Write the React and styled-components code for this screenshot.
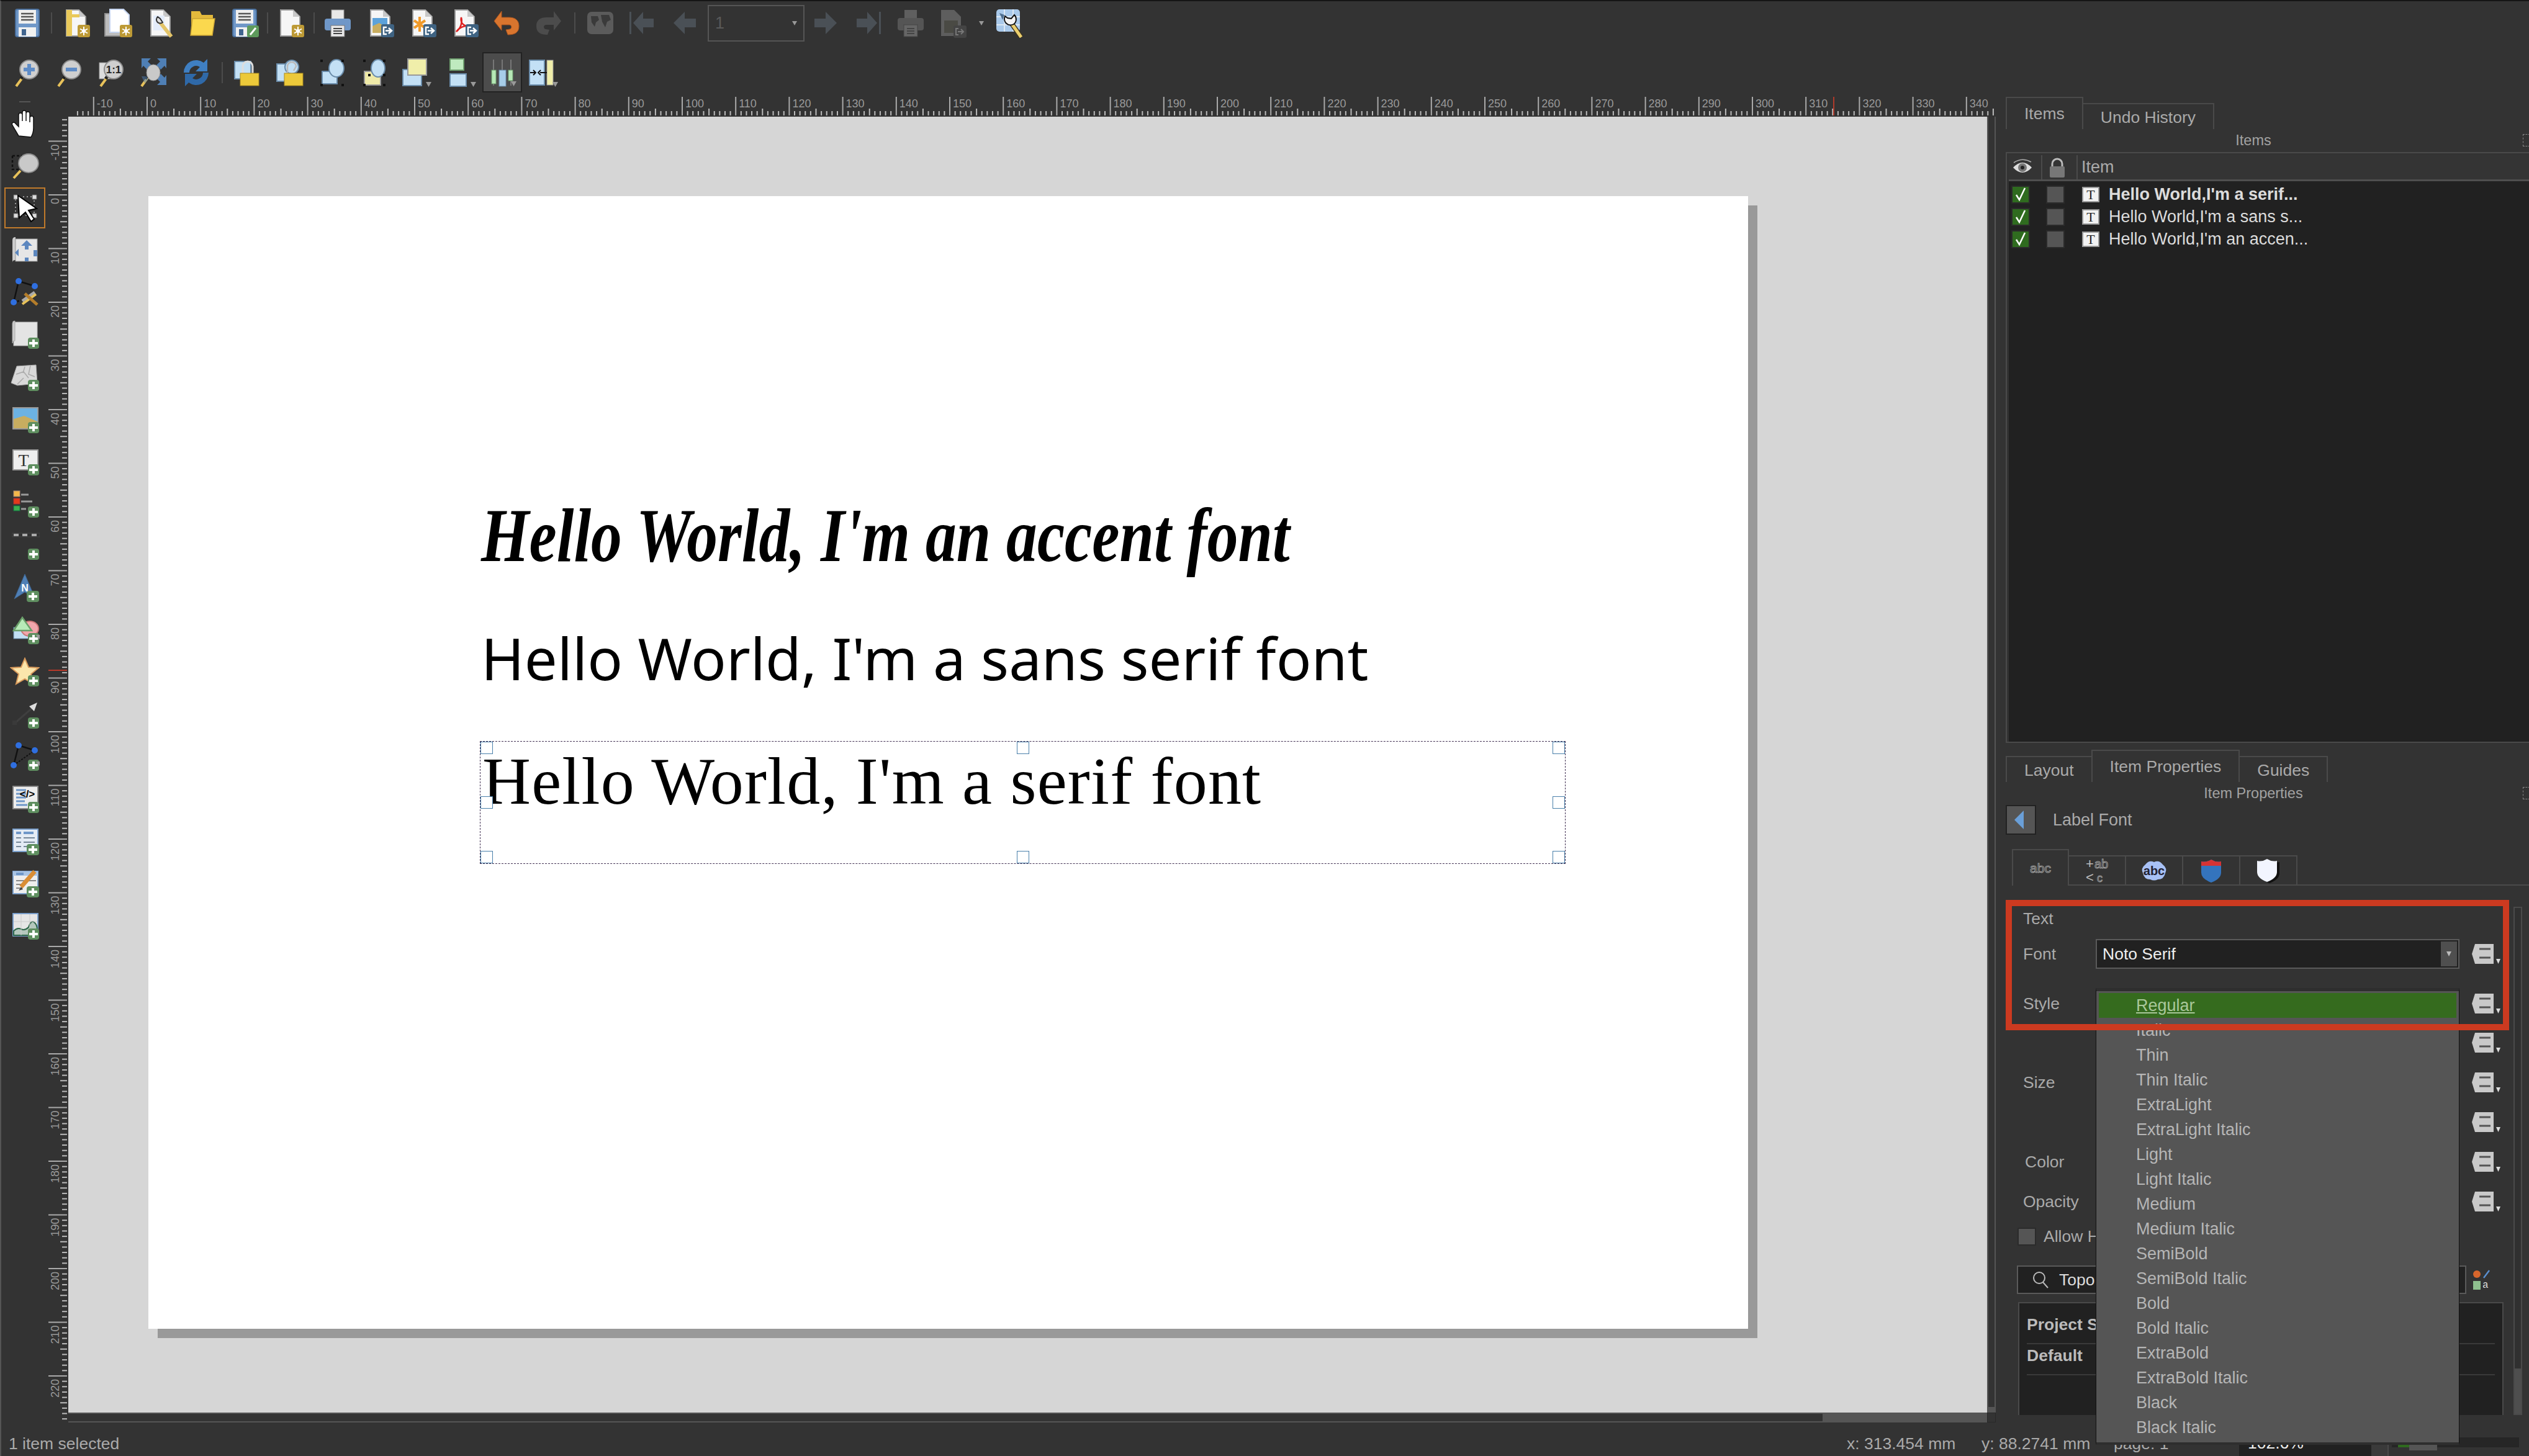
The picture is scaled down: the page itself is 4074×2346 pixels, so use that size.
import styled, { createGlobalStyle } from "styled-components";

const GlobalStyle = createGlobalStyle`
  html, body { margin: 0; padding: 0; background: #333; overflow: hidden; }
  * { box-sizing: border-box; }
`;

const Root = styled.div`
  width: 4074px;
  height: 2346px;
  display: flex;
  flex-direction: column;
  background: #333;
  color: #aaa;
  font-family: "Liberation Sans", Arial, sans-serif;
  font-size: 27px;
  border-left: 2px solid #555;
  border-top: 2px solid #151515;
  margin-left: 0;
`;

/* ---------- small drawing helpers ---------- */
const Icon = ({ children, size = 48 }) => (
  <svg width={size} height={size} viewBox="0 0 48 48" fontFamily="Liberation Sans, sans-serif">
    {children}
  </svg>
);
const Doc = () => (
  <>
    <path d="M9 3h20l11 11v31H9z" fill="#f6f6f6" stroke="#9a9a9a" strokeWidth="2" />
    <path d="M29 3v11h11z" fill="#c8c8c8" />
  </>
);
const Gear = () => (
  <g>
    <rect x="27" y="27" width="20" height="20" rx="3" fill="#bd9a36" />
    <path d="M37 30v14M31 33.5l12 7M43 33.5l-12 7" stroke="#fff" strokeWidth="2" />
    <circle cx="37" cy="37" r="3" fill="#fff" />
  </g>
);
const Out = () => (
  <g>
    <rect x="26" y="26" width="21" height="21" rx="3" fill="#3f6382" />
    <path d="M35 31h-5v11h5" fill="none" stroke="#fff" strokeWidth="2.5" />
    <path d="M33 36.500h8M38 32l5 4.500-5 4.500" fill="none" stroke="#fff" strokeWidth="2.5" />
  </g>
);
const Plus = ({ x = 29 }) => (
  <g>
    <rect x={x} y="29" width={47 - x} height="18" rx="4" fill="#5f8f60" />
    <path d={`M${(x + 47) / 2} 32v12M${(x + 47) / 2 - 7} 38h14`} stroke="#fff" strokeWidth="4" />
  </g>
);
const Drop = ({ x = 39, y = 39 }) => <path d={`M${x} ${y}h9l-4.500 8z`} fill="#999" />;
const Glass = ({ children }) => (
  <>
    <path d="M6 46l11-15" stroke="#e8c25a" strokeWidth="4" />
    <path d="M14 34l3-4" stroke="#222" strokeWidth="5" />
    <circle cx="27" cy="19" r="15" fill="#cfcfcf" stroke="#8d8d8d" strokeWidth="2" />
    {children}
  </>
);
const Floppy = () => (
  <>
    <rect x="5" y="2" width="38" height="44" rx="3" fill="#6f97c8" stroke="#4a6f9c" strokeWidth="2" />
    <rect x="10" y="3" width="28" height="22" fill="#efefef" />
    <path d="M14 9h20M14 14h20M14 19h20" stroke="#555" strokeWidth="2.500" />
    <rect x="10" y="31" width="28" height="15" fill="#f1f1f1" />
    <rect x="15" y="34" width="7" height="10" fill="#41658f" />
  </>
);
const Square = ({ x, y, w, h, fill = "#c3e0f5", stroke = "#6a8caa" }) => (
  <rect x={x} y={y} width={w} height={h} fill={fill} stroke={stroke} strokeWidth="2" />
);

const icons = {
  save: <Floppy />,
  newLayout: (
    <>
      <Doc />
      <path d="M9 3h9v42H9z" fill="#e9c95a" />
      <path d="M18 10h12v5H18z" fill="#e9c95a" />
      <Gear />
    </>
  ),
  duplicate: (
    <>
      <rect x="3" y="9" width="32" height="36" fill="#bdbdbd" stroke="#8f8f8f" strokeWidth="2" />
      <path d="M11 2h22l9 9v28H11z" fill="#fff" stroke="#c5d4ef" strokeWidth="2" />
      <Gear />
    </>
  ),
  manager: (
    <>
      <Doc />
      <path d="M13 12h18v24H13z" fill="#e4ecfa" />
      <path d="M42 46L23 22" stroke="#e3c468" strokeWidth="6" />
      <path d="M20 14a6 6 0 108 9l-4-6z" fill="#ddd" stroke="#333" strokeWidth="2" />
    </>
  ),
  folder: (
    <>
      <path d="M6 5h14l3 6h18v32H6z" fill="#e3b93c" />
      <path d="M8 17h36l-4 27H5z" fill="#fbd84e" stroke="#c9a234" strokeWidth="1.500" />
    </>
  ),
  saveAs: (
    <>
      <Floppy />
      <rect x="28" y="28" width="19" height="19" rx="3" fill="#5e9a5c" />
      <path d="M33 43l9-11" stroke="#fff" strokeWidth="3" />
    </>
  ),
  newDoc: (
    <>
      <Doc />
      <Gear />
    </>
  ),
  print: (
    <>
      <rect x="14" y="3" width="20" height="18" fill="#e8e8e8" stroke="#999" />
      <rect x="3" y="17" width="42" height="19" rx="4" fill="#6f97c8" />
      <rect x="13" y="28" width="22" height="18" fill="#e8e8e8" stroke="#777" />
      <path d="M17 33h14M17 37h14M17 41h14" stroke="#444" strokeWidth="2" />
    </>
  ),
  image: (
    <>
      <Doc />
      <rect x="12" y="16" width="24" height="24" fill="#5ca2da" />
      <path d="M12 40V29l11-5 13 8v8z" fill="#c8ad60" />
      <Out />
    </>
  ),
  svg: (
    <>
      <Doc />
      <path d="M20 14v24M11 20l18 12M29 20L11 32" stroke="#f09a2a" strokeWidth="4" />
      <Out />
    </>
  ),
  pdf: (
    <>
      <Doc />
      <path d="M11 38c8-6 10-16 8-23-2 9 4 14 12 14-8-1-16 3-20 9z" fill="none" stroke="#d22" strokeWidth="2.500" />
      <Out />
    </>
  ),
  undo: (
    <path
      d="M16 5L4 21l12 15v-9h12c5 0 5 6 1 7l-6 1 3 8c12 0 18-4 18-14S37 15 28 15H16z"
      fill="#d9752e"
      stroke="#a9551f"
    />
  ),
  redo: (
    <path
      d="M32 5l12 16-12 15v-9H20c-5 0-5 6-1 7l6 1-3 8C10 43 4 39 4 29s7-14 16-14h12z"
      fill="#4c4c4c"
    />
  ),
  atlas: (
    <>
      <rect x="3" y="6" width="42" height="36" rx="7" fill="#5b5b5b" />
      <path d="M9 13h11l2 6-5 4-2 7-5-7zM25 11h13l3 8-6 3-3 9-5-9z" fill="#3a3a3a" />
    </>
  ),
  first: <path d="M3 6h3v36H3zM9 24L25 6v11h17v14H25v11z" fill="#4a5056" />,
  prev: <path d="M6 24L24 6v11h18v14H24v11z" fill="#4a5056" />,
  next: <path d="M42 24L24 6v11H6v14h18v11z" fill="#4a5056" />,
  last: <path d="M45 6h-3v36h3zM39 24L23 6v11H6v14h17v11z" fill="#4a5056" />,
  printDim: (
    <>
      <rect x="14" y="3" width="20" height="16" fill="#5f5f5f" />
      <rect x="3" y="16" width="42" height="20" rx="4" fill="#555" />
      <rect x="13" y="27" width="22" height="19" fill="#666" stroke="#444" />
      <path d="M18 33h12M18 37h12M18 41h12" stroke="#444" strokeWidth="2" />
    </>
  ),
  exportDim: (
    <>
      <path d="M5 3h21l11 11v31H5z" fill="#5e5e5e" />
      <rect x="10" y="20" width="22" height="20" fill="#4a4a44" />
      <rect x="25" y="28" width="21" height="20" rx="3" fill="#444" />
      <path d="M33 33h-4v10h4M32 38h9M37 34l4 4-4 4" fill="none" stroke="#777" strokeWidth="2" />
    </>
  ),
  report: (
    <>
      <rect x="3" y="2" width="38" height="36" rx="5" fill="#a9c9ea" />
      <path d="M3 14h38M3 27h38M16 2v36M30 2v36" stroke="#dce8f4" strokeWidth="2" />
      <path d="M8 8l8 3-3 8zM28 16l5 10-8-2z" fill="#4f6f90" />
      <path d="M27 24l16 23" stroke="#3b3320" strokeWidth="8" />
      <path d="M27 24l16 23" stroke="#eccf6d" strokeWidth="5" />
      <path d="M17 13a10 10 0 0014 13 10 10 0 001-15l-5 6-6-1z" fill="#f4f4f4" stroke="#111" strokeWidth="2" />
    </>
  ),
  zoomIn: (
    <Glass>
      <path d="M27 10v18M18 19h18" stroke="#5f8cc6" strokeWidth="6" />
    </Glass>
  ),
  zoomOut: (
    <Glass>
      <path d="M18 19h18" stroke="#5f8cc6" strokeWidth="6" />
    </Glass>
  ),
  zoomFull: (
    <>
      <rect x="4" y="8" width="20" height="26" fill="#ddd" stroke="#999" />
      <Glass>
        <text x="27" y="25" fontSize="17" fontWeight="700" textAnchor="middle" fill="#222">
          1:1
        </text>
      </Glass>
    </>
  ),
  zoomAll: (
    <>
      <path d="M4 1h15l-5 5 6 6-7 7-6-6-3 4zM44 1H29l5 5-6 6 7 7 6-6 3 4zM44 44H29l5-5-6-6 7-7 6 6 3-4z" fill="#4f7fb5" />
      <path d="M4 46l10-14" stroke="#e8c25a" strokeWidth="4" />
      <path d="M10 34l3-4" stroke="#222" strokeWidth="5" />
      <ellipse cx="23" cy="24" rx="11" ry="13" fill="#c9c9c9" stroke="#8d8d8d" />
      <path d="M4 30h8l3 5-6 6z" fill="#4f7fb5" opacity="0.5" />
    </>
  ),
  refresh: (
    <>
      <path d="M4 24A20 20 0 0136 8l6-6v20H23l7-7A11 11 0 0013 24z" fill="#3f7fc2" />
      <path d="M44 24a20 20 0 01-32 16l-6 6V26h19l-7 7a11 11 0 0017-9z" fill="#2f69a8" />
    </>
  ),
  lock: (
    <>
      <Square x={3} y={6} w={26} h={28} />
      <path d="M16 28V14a8 8 0 0116 0v14" fill="none" stroke="#ddd" strokeWidth="3" />
      <rect x="12" y="25" width="30" height="20" fill="#ecc93a" stroke="#a98a20" />
    </>
  ),
  unlock: (
    <>
      <Square x={3} y={10} w={26} h={28} />
      <circle cx="27" cy="15" r="11" fill="#c3e0f5" stroke="#6a8caa" strokeWidth="2" />
      <path d="M20 26V14a7 7 0 0114 0l-4 7" fill="none" stroke="#bbb" strokeWidth="2.500" />
      <rect x="15" y="25" width="30" height="20" fill="#ecc93a" stroke="#a98a20" />
    </>
  ),
  group: (
    <>
      <Square x={8} y={22} w={24} h={20} />
      <ellipse cx="31" cy="17" rx="12" ry="14" fill="#c3e0f5" stroke="#6a8caa" strokeWidth="2" />
      <path d="M5 3h4v4H5zM39 3h4v4h-4zM5 42h4v4H5zM39 42h4v4h-4z" fill="#111" />
    </>
  ),
  ungroup: (
    <>
      <Square x={8} y={22} w={26} h={22} fill="#efeaa8" stroke="#999" />
      <ellipse cx="30" cy="17" rx="11" ry="14" fill="#c3e0f5" stroke="#6a8caa" strokeWidth="2" />
      <path d="M6 3h4v4H6zM38 3h4v4h-4zM6 42h4v4H6zM38 42h4v4h-4zM14 26h4v4h-4zM38 26h4v4h-4z" fill="#111" />
    </>
  ),
  raise: (
    <>
      <Square x={2} y={19} w={30} h={26} />
      <Square x={10} y={2} w={30} h={26} fill="#f0eeaa" stroke="#999" />
      <Drop />
    </>
  ),
  alignStack: (
    <>
      <Square x={6} y={2} w={22} h={18} fill="#bfeabf" stroke="#6f9f6f" />
      <Square x={6} y={26} w={26} h={20} />
      <Drop />
    </>
  ),
  distribute: (
    <>
      <path d="M10 3v42M24 3v42M38 3v42" stroke="#777" strokeWidth="2" />
      <rect x="7" y="20" width="7" height="22" fill="#b6e8b6" stroke="#6f9f6f" />
      <rect x="19" y="20" width="11" height="26" fill="#a7cde8" stroke="#6a8caa" />
      <rect x="34" y="20" width="7" height="17" fill="#b6e8b6" stroke="#6f9f6f" />
      <Drop x={38} y={38} />
    </>
  ),
  resize: (
    <>
      <Square x={2} y={4} w={24} h={40} />
      <rect x="30" y="4" width="10" height="40" fill="#f0eeaa" stroke="#999" />
      <path d="M3 24h8M19 24h8M30 24h-4" stroke="#111" strokeWidth="2" />
      <path d="M8 20l4 4-4 4M20 20l-4 4 4 4" fill="none" stroke="#111" strokeWidth="2" />
      <Drop x={39} y={39} />
    </>
  ),
  hand: (
    <path
      d="M14 44L4 27q-2-4 2-5q2 0 4 3l4 4V10q0-3 3-3q3 0 3 3v10V6q0-3 3-3q3 0 3 3v14V8q0-3 3-3q3 0 3 3v14v-7q0-3 3-3q3 0 3 3v16q0 8-4 15z"
      fill="#fff"
      stroke="#111"
      strokeWidth="1.500"
    />
  ),
  marquee: (
    <>
      <path d="M4 8h16M4 8v22h10" fill="none" stroke="#111" strokeWidth="2.500" strokeDasharray="4 3" />
      <path d="M6 44l11-12" stroke="#e8c25a" strokeWidth="4" />
      <ellipse cx="30" cy="20" rx="16" ry="15" fill="#c9c9c9" stroke="#8d8d8d" strokeWidth="2" />
    </>
  ),
  select: (
    <>
      <rect x="9" y="6" width="30" height="30" fill="none" stroke="#999" strokeWidth="2" strokeDasharray="2 4" />
      <path d="M6 3h7v7H6zM36 3h7v7h-7zM6 33h7v7H6zM36 33h7v7h-7z" fill="#ddd" stroke="#666" />
      <path d="M13 4l30 21-13 3 9 14-5 4-9-15-10 9z" fill="#fff" stroke="#000" strokeWidth="2" />
    </>
  ),
  moveContent: (
    <>
      <path d="M4 8q0-5 5-5v37q-5 0-5 4z" fill="#ccc" />
      <rect x="9" y="6" width="35" height="36" fill="#e6e6e6" stroke="#999" />
      <path d="M27 8l9 9h-6v6h-6v-6h-6zM14 22v12l-6-6zM20 26h-6M30 36h-6v6h6zM38 24h6v10h-6z" fill="#5c87bf" />
    </>
  ),
  editNodes: (
    <>
      <path d="M6 40L14 6l26 8" fill="none" stroke="#111" strokeWidth="2.500" />
      <path d="M6 40l12-3" stroke="#111" strokeWidth="2.500" strokeDasharray="3 3" />
      <path d="M20 38l20-14" stroke="#aaa" strokeWidth="5" />
      <path d="M20 43l22-16" stroke="#e8c25a" strokeWidth="4" />
      <path d="M24 26l20 18" stroke="#b47d2a" strokeWidth="5" />
      <circle cx="14" cy="6" r="5" fill="#2f6fe0" />
      <circle cx="40" cy="14" r="5" fill="#2f6fe0" />
      <circle cx="6" cy="40" r="5" fill="#2f6fe0" />
    </>
  ),
  addMap: (
    <>
      <rect x="6" y="4" width="38" height="38" fill="#e4e4e4" stroke="#bbb" />
      <path d="M4 38q0-4 4-4V2Q4 2 4 6z" fill="#ccc" stroke="#aaa" />
      <Plus />
    </>
  ),
  add3d: (
    <>
      <path d="M11 7l31-2 2 30-32 3-10-4z" fill="#d9d9d9" stroke="#aaa" />
      <path d="M10 20l12-4 8 10M24 8l-3 10M33 6l-3 14 10 4M12 36l10-10" fill="none" stroke="#aaa" strokeWidth="1.500" />
      <Plus />
    </>
  ),
  addPicture: (
    <>
      <rect x="5" y="6" width="40" height="34" fill="#6cb2e3" stroke="#999" strokeWidth="2" />
      <path d="M6 39V24l17-5 21 9v11z" fill="#c8ad60" />
      <Plus />
    </>
  ),
  addLabel: (
    <>
      <rect x="5" y="6" width="40" height="32" fill="#eee" stroke="#999" strokeWidth="2" />
      <text x="22" y="32" fontSize="28" fontFamily="Liberation Serif, serif" textAnchor="middle" fill="#333">
        T
      </text>
      <Plus />
    </>
  ),
  addLegend: (
    <>
      <rect x="6" y="4" width="10" height="9" fill="#f4b74a" stroke="#a87" />
      <rect x="6" y="16" width="10" height="9" fill="#e33a1c" stroke="#a33" />
      <rect x="6" y="28" width="10" height="8" fill="#3cad4f" stroke="#174" />
      <path d="M18 10h12M18 21h18M18 33h8" stroke="#999" strokeWidth="3" />
      <Plus />
    </>
  ),
  addScale: (
    <>
      <rect x="4" y="4" width="44" height="6" fill="#333" stroke="#444" />
      <path d="M6 7h8M20 7h8M35 7h8" stroke="#aaa" strokeWidth="4" />
      <Plus />
    </>
  ),
  addNorth: (
    <>
      <path d="M24 2l17 40-17-11L7 42z" fill="#4f7fb5" stroke="#3c628b" />
      <text x="24" y="30" fontSize="16" fontWeight="700" textAnchor="middle" fill="#fff">
        N
      </text>
      <Plus x={27} />
    </>
  ),
  addShape: (
    <>
      <rect x="6" y="20" width="36" height="18" fill="#c3e0f5" stroke="#6a8caa" />
      <ellipse cx="32" cy="22" rx="14" ry="12" fill="#f2a6ac" stroke="#c77" strokeWidth="2" />
      <path d="M20 4l15 21H6z" fill="#b8eab8" stroke="#6a9f6a" strokeWidth="2.500" />
      <Plus />
      <Drop x={42} y={32} />
    </>
  ),
  addMarker: (
    <>
      <path d="M24 2l6 14 16 1-12 10 4 16-14-8-14 8 4-16L2 17l16-1z" fill="#fbe6ac" stroke="#d99b5c" strokeWidth="2" />
      <Plus />
    </>
  ),
  addArrow: (
    <>
      <path d="M8 38l30-26" stroke="#3f3f3f" strokeWidth="3" />
      <rect x="4" y="34" width="7" height="7" fill="#3a3a3a" />
      <path d="M44 5l-5 14-8-8z" fill="#ddd" />
      <Plus />
    </>
  ),
  addNodeItem: (
    <>
      <path d="M6 38L14 6l26 8" fill="none" stroke="#111" strokeWidth="2.500" />
      <path d="M6 38l34-24" stroke="#111" strokeWidth="2" strokeDasharray="3 2" />
      <circle cx="14" cy="6" r="5" fill="#2f6fe0" />
      <circle cx="40" cy="14" r="5" fill="#2f6fe0" />
      <circle cx="6" cy="38" r="5" fill="#2f6fe0" />
      <Plus />
      <Drop x={42} y={32} />
    </>
  ),
  addHtml: (
    <>
      <rect x="5" y="4" width="40" height="36" fill="#eee" stroke="#888" strokeWidth="2" />
      <path d="M10 10h16M10 16h16M10 22h16M10 28h14M10 34h18" stroke="#6f97c8" strokeWidth="3" />
      <text x="28" y="22" fontSize="17" fontWeight="700" textAnchor="middle" fill="#000">
        {"</>"}
      </text>
      <Plus />
    </>
  ),
  addTable: (
    <>
      <rect x="5" y="5" width="40" height="36" fill="#e4ebf4" stroke="#7ba0cc" strokeWidth="2" />
      <path d="M10 11h8M22 11h16" stroke="#6f97c8" strokeWidth="4" />
      <path d="M10 19h8M22 19h18M10 26h8M22 26h18M10 33h8M22 33h10" stroke="#789" strokeWidth="2" />
      <Plus x={27} />
    </>
  ),
  addFixed: (
    <>
      <rect x="5" y="5" width="40" height="36" fill="#eee" stroke="#7ba0cc" strokeWidth="2" />
      <rect x="5" y="5" width="40" height="7" fill="#a9c4e4" />
      <path d="M10 9h12" stroke="#6f97c8" strokeWidth="4" />
      <path d="M10 20h14M10 26h14M10 32h10M28 20h14" stroke="#888" strokeWidth="2" />
      <path d="M40 5L18 30" stroke="#d98d35" strokeWidth="7" />
      <path d="M18 30l-4 6 7-2z" fill="#444" />
      <Plus x={27} />
    </>
  ),
  addChart: (
    <>
      <rect x="5" y="5" width="40" height="36" fill="#e6e6e6" stroke="#7ba0cc" strokeWidth="2" />
      <path d="M6 33q6-6 12-3t12-3q4-12 9-8t5 12v9H6z" fill="#b4c8bd" stroke="#2d6649" strokeWidth="2" />
      <path d="M18 6v34M32 6v34M6 18h38" stroke="#ccc" />
      <Plus />
    </>
  ),
};

/* ---------- top toolbars ---------- */
const TopBar = styled.div`
  height: 148px;
  display: flex;
  flex-direction: column;
`;
const ToolRow = styled.div`
  display: flex;
  align-items: center;
  height: ${(p) => p.$h}px;
  margin-top: ${(p) => p.$mt || 0}px;
  padding-left: 8px;
`;
const ToolBtn = styled.div`
  width: ${(p) => p.$w || 68}px;
  height: ${(p) => (p.$on ? "65px" : "48px")};
  display: flex;
  align-items: center;
  justify-content: center;
  flex: none;
  background: ${(p) => (p.$on ? "#4c4c4c" : "transparent")};
  outline: ${(p) => (p.$on ? "2px solid #222" : "none")};
  outline-offset: -2px;
`;
const Sep = styled.div`
  width: ${(p) => p.$w}px;
  height: 34px;
  flex: none;
  display: flex;
  justify-content: center;
  &::after {
    content: "";
    width: 2px;
    height: 100%;
    background: ${(p) => (p.$line ? "#4c4c4c" : "transparent")};
  }
`;
const MiniDrop = styled.div`
  width: 23px;
  flex: none;
  display: flex;
  justify-content: center;
`;
const PageSpin = styled.div`
  width: 156px;
  height: 59px;
  margin-left: 3px;
  flex: none;
  display: flex;
  align-items: center;
  justify-content: space-between;
  padding: 0 10px;
  background: transparent;
  border: 2px solid #555;
  color: #5a5a5a;
`;
const SpinArrow = styled.span`
  width: 0;
  height: 0;
  border-left: 4px solid transparent;
  border-right: 4px solid transparent;
  border-top: 7px solid #999;
`;

/* ---------- main area ---------- */
const Main = styled.div`
  display: flex;
  height: 2146px;
  flex: none;
`;
const ToolColumn = styled.div`
  width: 76px;
  flex: none;
  display: flex;
  flex-direction: column;
  align-items: center;
  padding-top: 13px;
`;
const ColumnGrip = styled.div`
  width: 18px;
  height: 2px;
  flex: none;
  background: #555;
`;
const ColumnTool = styled.div`
  width: 66px;
  height: ${(p) => (p.$on ? "66px" : "68px")};
  margin: ${(p) => (p.$on ? "1px 0" : "0")};
  flex: none;
  display: flex;
  align-items: center;
  justify-content: center;
  border: ${(p) => (p.$on ? "2px solid #c07a2b" : "none")};
`;
const Workspace = styled.div`
  width: 3153px;
  flex: none;
  display: grid;
  grid-template-columns: 32px 1fr;
  grid-template-rows: 38px 1fr;
`;
const RulerSvg = styled.svg`
  display: block;
  font-family: "Liberation Sans", Arial, sans-serif;
`;
const ViewWrap = styled.div`
  display: flex;
  flex-direction: column;
  padding: 0 16px 4px 0;
  min-height: 0;
`;
const ViewRow = styled.div`
  display: flex;
  flex: 1;
  min-height: 0;
`;
const Canvas = styled.div`
  flex: 1;
  background: #d6d6d6;
  padding: 128px 0 0 129px;
`;
const VScroll = styled.div`
  width: 14px;
  flex: none;
  background: #555;
  padding: 0 2px 9px;
  display: flex;
`;
const VThumb = styled.div`
  flex: 1;
  background: #333;
`;
const ScrollThumb = styled.div`
  width: 100%;
  height: ${(p) => p.$h}px;
  background: #4e4e4e;
`;
const HScroll = styled.div`
  height: 16px;
  flex: none;
  display: flex;
`;
const HTrack = styled.div`
  flex: 1;
  background: #555;
  padding: 2px 265px 2px 0;
  display: flex;
`;
const HThumb = styled.div`
  flex: 1;
  background: #333;
`;
const ScrollCorner = styled.div`
  width: 14px;
  flex: none;
  background: #333;
  border: 1px solid #282828;
`;

/* ---------- layout page ---------- */
const Page = styled.div`
  position: relative;
  width: 2577px;
  height: 1825px;
  background: #fff;
  box-shadow: 15px 15px 0 #999;
`;
const PageLabel = styled.div`
  position: absolute;
  left: ${(p) => p.$x}px;
  top: ${(p) => p.$y}px;
  white-space: nowrap;
  color: #000;
  line-height: 1;
  font-family: ${(p) => p.$font};
  font-size: ${(p) => p.$size}px;
  font-weight: ${(p) => p.$weight || 400};
  font-style: ${(p) => p.$italic || "normal"};
  letter-spacing: ${(p) => p.$track || 0}px;
  transform: scaleX(${(p) => p.$squeeze || 1});
  transform-origin: left center;
`;
const Selection = styled.div`
  position: absolute;
  left: 534px;
  top: 878px;
  width: 1749px;
  height: 198px;
  border: 1px dashed #443355;
  display: grid;
  grid-template-columns: repeat(3, 20px);
  grid-template-rows: repeat(3, 20px);
  justify-content: space-between;
  align-content: space-between;
`;
const Handle = styled.div`
  background: #fff;
  border: 1px solid #4a80aa;
  visibility: ${(p) => (p.$hidden ? "hidden" : "visible")};
`;

/* ---------- dock ---------- */
const Dock = styled.div`
  width: 843px;
  flex: none;
  display: flex;
  flex-direction: column;
  padding-top: 4px;
`;
const TabBar = styled.div`
  display: flex;
  align-items: flex-end;
  height: ${(p) => p.$h}px;
  flex: none;
  margin-top: ${(p) => p.$mt || 0}px;
`;
const Tab = styled.div`
  height: ${(p) => (p.$on ? 52 : 42)}px;
  padding: ${(p) => (p.$on ? "12px" : "8px")} 28px 0;
  margin-right: -2px;
  border: 2px solid #4a4a4a;
  border-bottom: none;
  white-space: nowrap;
  line-height: 1;
  font-size: 26.500px;
  color: #aaa;
`;
const DockTitle = styled.div`
  height: 37px;
  flex: none;
  position: relative;
  display: flex;
  align-items: center;
  justify-content: center;
  padding-right: 45px;
  font-size: 23.500px;
  color: #a2a2a2;
`;
const FloatMark = styled.div`
  position: absolute;
  right: -6px;
  top: 8px;
  width: 16px;
  height: 20px;
  border: 1px dashed #888;
`;
const ItemsPanel = styled.div`
  height: 952px;
  flex: none;
  border: 2px solid #4a4a4a;
  border-right: none;
  padding: 3px 0 0 3px;
  background: #333;
`;
const ItemsInner = styled.div`
  height: 100%;
  background: #212121;
`;
const ItemsHeader = styled.div`
  display: grid;
  grid-template-columns: 54px 57px 1fr;
  height: 42px;
  background: #343434;
  border-bottom: 3px solid #4f4f4f;
`;
const HeaderCell = styled.div`
  display: flex;
  align-items: center;
  padding-left: ${(p) => p.$pl || 0}px;
  border-right: ${(p) => (p.$line ? "2px solid #4a4a4a" : "none")};
  color: #aaa;
`;
const ItemRow = styled.div`
  display: grid;
  grid-template-columns: 54px 57px 50px 1fr;
  align-items: center;
  height: 36px;
  position: relative;
  top: 3px;
`;
const CheckBox = styled.div`
  width: 30px;
  height: 29px;
  margin-left: ${(p) => p.$ml || 0}px;
  display: flex;
  align-items: center;
  justify-content: center;
  background: ${(p) => (p.$on ? "#2f6b1f" : "#555")};
  border: 2px solid #2b2b2b;
`;
const TypeIcon = styled.div`
  width: 28px;
  height: 25px;
  margin-left: 7px;
  background: #f2f2f2;
  border: 2px solid #999;
  color: #222;
  font-family: "Liberation Serif", serif;
  font-size: 22px;
  line-height: 21px;
  text-align: center;
`;
const ItemName = styled.div`
  color: #dcdcdc;
  font-size: 27px;
  font-weight: ${(p) => (p.$bold ? 700 : 400)};
  white-space: nowrap;
`;
const BackRow = styled.div`
  height: 48px;
  flex: none;
  display: flex;
  align-items: center;
  gap: 27px;
`;
const BackBtn = styled.div`
  width: 49px;
  height: 48px;
  background: #555;
  border: 2px solid #222;
  display: flex;
  align-items: center;
  justify-content: center;
  padding-right: 6px;
`;
const SubTabBar = styled.div`
  display: flex;
  align-items: flex-end;
  height: 59px;
  flex: none;
  margin: 23px 0 0 10px;
`;
const SubTab = styled.div`
  width: 92px;
  height: ${(p) => (p.$on ? 59 : 49)}px;
  display: flex;
  align-items: center;
  justify-content: center;
  border: 2px solid #4a4a4a;
  border-left-width: ${(p) => (p.$first ? 2 : 0)}px;
  border-bottom: ${(p) => (p.$on ? "none" : "2px solid #4a4a4a")};
`;
const SubTabFill = styled.div`
  flex: 1;
  border-bottom: 2px solid #4a4a4a;
`;
const Form = styled.div`
  position: relative;
  flex: 1;
  display: flex;
  min-height: 0;
`;
const FormBody = styled.div`
  width: 818px;
  flex: none;
  padding-top: 25px;
`;
const FormRow = styled.div`
  display: flex;
  align-items: center;
  height: ${(p) => p.$h}px;
  margin-top: ${(p) => p.$mt || 0}px;
  padding-left: ${(p) => p.$pl ?? 28}px;
  position: relative;
`;
const FormLabel = styled.div`
  width: ${(p) => p.$w || 117}px;
  flex: none;
  color: #aaa;
  font-size: 26.500px;
  padding-left: ${(p) => p.$pl || 0}px;
`;
const Combo = styled.div`
  width: 586px;
  height: 48px;
  display: flex;
  align-items: center;
  justify-content: space-between;
  padding: 2px 2px 2px 9px;
  background: #212121;
  border: 2px solid #5a5a5a;
  color: #eee;
  font-size: 26.500px;
`;
const ComboArrow = styled.div`
  width: 26px;
  height: 100%;
  display: flex;
  align-items: center;
  justify-content: center;
  background: #4f4f4f;
`;
const Defined = styled.div`
  position: absolute;
  left: 750px;
  top: 50%;
  transform: translateY(-50%);
  display: flex;
`;
const CheckLabel = styled.div`
  margin-left: 12px;
  color: #aaa;
  font-size: 26.500px;
  white-space: nowrap;
`;
const SearchBox = styled.div`
  width: 724px;
  height: 46px;
  margin-left: -10px;
  display: flex;
  align-items: center;
  gap: 14px;
  padding-left: 22px;
  background: #212121;
  border: 2px solid #5a5a5a;
  color: #ddd;
  font-size: 26.500px;
`;
const StylePanel = styled.div`
  width: 782px;
  height: 182px;
  margin: 13px 0 0 20px;
  padding: 16px 12px 0;
  background: #212121;
  border: 2px solid #4a4a4a;
  border-bottom: none;
`;
const StyleName = styled.div`
  height: 50px;
  line-height: 36px;
  font-weight: 700;
  font-size: 26.500px;
  color: #bbb;
  white-space: nowrap;
  border-bottom: 2px solid #3a3a3a;
`;
const FormScroll = styled.div`
  width: 14px;
  height: 819px;
  margin-top: 34px;
  flex: none;
  background: #303030;
  border: 2px solid #4a4a4a;
  display: flex;
  align-items: flex-end;
`;
const Popup = styled.div`
  position: absolute;
  z-index: 10;
  left: 145px;
  top: 165px;
  width: 586px;
  height: 736px;
  padding: 3px 4px 0;
  background: #555;
  border: 1px solid #111;
  border-top: 5px solid #2e2e2e;
  border-bottom: 4px solid #2e2e2e;
`;
const PopupRow = styled.div`
  height: 40px;
  line-height: 40px;
  padding-left: 60px;
  font-size: 27px;
  background: ${(p) => (p.$on ? "#356b1e" : "transparent")};
  color: ${(p) => (p.$on ? "#a9c79a" : "#b6b6b6")};
  text-decoration: ${(p) => (p.$on ? "underline" : "none")};
`;
const RedBox = styled.div`
  position: absolute;
  z-index: 11;
  left: 0;
  top: 23px;
  width: 811px;
  height: 210px;
  border: 10px solid #cc3a20;
  pointer-events: none;
`;

/* ---------- status bar ---------- */
const StatusBar = styled.div`
  height: 50px;
  flex: none;
  display: flex;
  align-items: stretch;
  position: relative;
  font-size: 26.500px;
  color: #aaa;
`;
const StatusText = styled.div`
  width: ${(p) => p.$w}px;
  flex: none;
  padding-top: 15px;
  white-space: nowrap;
  line-height: 30px;
  padding-left: ${(p) => p.$pl || 0}px;
`;
const ZoomCombo = styled.div`
  width: 213px;
  flex: none;
  background: #212121;
  color: #eee;
  padding: 14px 0 0 14px;
  line-height: 30px;
`;
const ZoomArrow = styled.div`
  width: 28px;
  flex: none;
  background: #3a3a3a;
  border-right: 2px solid #4a4a4a;
`;
const ZoomSlider = styled.div`
  width: 205px;
  height: 16px;
  flex: none;
  margin: 20px 0 0 5px;
  padding-left: 10px;
  background: #262626;
  display: flex;
`;
const SliderFill = styled.div`
  width: 18px;
  background: #2f6b1f;
`;
const SliderKnob = styled.div`
  width: 45px;
  height: 21px;
  background: #555;
`;

/* ---------- drawings used in the dock ---------- */
const Tick = () => (
  <svg width="20" height="24" viewBox="0 0 20 24">
    <path d="M3 13l5 8L17 2" fill="none" stroke="#fff" strokeWidth="2.500" />
  </svg>
);
const DefinedIcon = () => (
  <svg width="48" height="36" viewBox="0 0 48 36">
    <path d="M6 2h30v32H6l-5-16z" fill="#c9c9c9" />
    <path d="M13 10h18M13 24h18" stroke="#555" strokeWidth="3" />
    <path d="M40 26h7l-3.500 8z" fill="#ddd" />
  </svg>
);
const SmallArrow = () => (
  <svg width="10" height="10" viewBox="0 0 10 10">
    <path d="M1 1h8L5 9z" fill="#bbb" />
  </svg>
);
const subIcons = [
  <svg key="a" width="40" height="34" viewBox="0 0 40 34">
    <text x="20" y="24" fontSize="21" textAnchor="middle" fill="#333" stroke="#999" strokeWidth="1" fontFamily="Liberation Sans, sans-serif">
      abc
    </text>
  </svg>,
  <svg key="b" width="40" height="48" viewBox="0 0 40 48" fontFamily="Liberation Sans, sans-serif">
    <text x="2" y="20" fontSize="22" fill="#bbb">+</text>
    <text x="16" y="20" fontSize="20" fill="#333" stroke="#999">ab</text>
    <text x="2" y="42" fontSize="22" fill="#bbb">{"<"}</text>
    <text x="20" y="42" fontSize="18" fill="#333" stroke="#999">c</text>
  </svg>,
  <svg key="c" width="44" height="36" viewBox="0 0 44 36" fontFamily="Liberation Sans, sans-serif">
    <path d="M8 8q6-8 14-4 8-4 14 4 8 6 4 14-2 10-12 10-6 3-12 0Q6 32 4 22 0 14 8 8z" fill="#a8c1f5" />
    <text x="22" y="25" fontSize="20" fontWeight="700" textAnchor="middle" fill="#223">abc</text>
  </svg>,
  <svg key="d" width="36" height="42" viewBox="0 0 36 42">
    <path d="M2 6q8 2 16-3 8 5 16 3v18q0 10-16 16Q2 34 2 24z" fill="#3474bd" />
    <path d="M2 6q8 2 16-3 8 5 16 3v7H2z" fill="#d63333" />
  </svg>,
  <svg key="e" width="40" height="44" viewBox="0 0 40 44">
    <path d="M6 8q8 2 16-3 8 5 16 3v18q0 10-16 16Q6 36 6 26z" fill="#111" />
    <path d="M2 6q8 2 16-3 8 5 16 3v18q0 10-16 16Q2 34 2 24z" fill="#f2f5ff" />
  </svg>,
];

/* ---------- rulers ---------- */
const range = (a, b) => Array.from({ length: b - a + 1 }, (_, i) => a + i);

const HRuler = () => {
  const zero = 127;
  const unit = 8.62;
  return (
    <RulerSvg width="3121" height="38">
      {range(-13, 345).map((n) => {
        const x = zero + n * unit;
        const top = n % 10 === 0 ? 6 : n % 5 === 0 ? 25 : 29;
        return <line key={n} x1={x} x2={x} y1={top} y2="36" stroke={n % 10 === 0 ? "#aaa" : "#bbb"} strokeWidth="2" />;
      })}
      {range(-1, 34).map((n) => (
        <text key={n} x={zero + n * 86.2 + 5} y="23" fontSize="18" fill="#999">
          {n * 10}
        </text>
      ))}
      <line x1="2844" x2="2844" y1="6" y2="36" stroke="#b03a2a" strokeWidth="2" />
    </RulerSvg>
  );
};

const VRuler = () => {
  const zero = 126;
  const unit = 8.65;
  return (
    <RulerSvg width="32" height="2104">
      {range(-14, 228).map((n) => {
        const y = zero + n * unit;
        const left = n % 10 === 0 ? 0 : n % 5 === 0 ? 19 : 22;
        return <line key={n} y1={y} y2={y} x1={left} x2="30" stroke={n % 10 === 0 ? "#aaa" : "#bbb"} strokeWidth="2" />;
      })}
      {range(-1, 22).map((n) => {
        const y = zero + n * 86.5 + 5;
        return (
          <text key={n} x="17" y={y} fontSize="18" fill="#999" textAnchor="end" transform={`rotate(-90 17 ${y})`}>
            {n * 10}
          </text>
        );
      })}
      <line x1="0" x2="30" y1="892" y2="892" stroke="#b8392a" strokeWidth="2" />
    </RulerSvg>
  );
};

const row1 = [
  ["save"], ["sep", 10, 1], ["newLayout"], ["duplicate"], ["manager"], ["folder"], ["saveAs"], ["sep", 5, 1],
  ["newDoc"], ["sep", 9, 1], ["print"], ["image"], ["svg"], ["pdf"], ["undo"], ["redo"], ["sep", 15, 1],
  ["atlas"], ["first"], ["prev"], ["spin"], ["next"], ["last"], ["sep", 1, 0], ["printDim"], ["exportDim"], ["drop"], ["report"],
];
const row2 = [
  ["zoomIn"], ["zoomOut"], ["zoomFull"], ["zoomAll"], ["refresh"], ["sep", 15, 1], ["lock"], ["unlock"], ["group"],
  ["ungroup"], ["raise"], ["sep", 4, 0], ["alignStack"],
];
const leftTools = [
  "marquee", "select", "moveContent", "editNodes", "addMap", "add3d", "addPicture", "addLabel", "addLegend",
  "addScale", "addNorth", "addShape", "addMarker", "addArrow", "addNodeItem", "addHtml", "addTable", "addFixed", "addChart",
];
const fontStyles = [
  "Regular", "Italic", "Thin", "Thin Italic", "ExtraLight", "ExtraLight Italic", "Light", "Light Italic", "Medium",
  "Medium Italic", "SemiBold", "SemiBold Italic", "Bold", "Bold Italic", "ExtraBold", "ExtraBold Italic", "Black", "Black Italic",
];
const items = [
  ["Hello World,I'm a serif...", true],
  ["Hello World,I'm a sans s...", false],
  ["Hello World,I'm an accen...", false],
];

const renderTool = ([name, w, line], i) => {
  if (name === "sep") return <Sep key={i} $w={w} $line={!!line} />;
  if (name === "drop")
    return (
      <MiniDrop key={i}>
        <SpinArrow />
      </MiniDrop>
    );
  if (name === "spin")
    return (
      <PageSpin key={i}>
        1<SpinArrow />
      </PageSpin>
    );
  return (
    <ToolBtn key={i}>
      <Icon>{icons[name]}</Icon>
    </ToolBtn>
  );
};

const App = () => {
  return (
    <Root>
      <GlobalStyle />
      <TopBar>
        <ToolRow $h={70}>{row1.map(renderTool)}</ToolRow>
        <ToolRow $h={65} $mt={12}>
          {row2.map(renderTool)}
          <ToolBtn $w={64} $on>
            <Icon>{icons.distribute}</Icon>
          </ToolBtn>
          <ToolBtn>
            <Icon>{icons.resize}</Icon>
          </ToolBtn>
        </ToolRow>
      </TopBar>

      <Main>
        <ToolColumn>
          <ColumnGrip />
          <ColumnTool>
            <Icon>{icons.hand}</Icon>
          </ColumnTool>
          {leftTools.map((name) => (
            <ColumnTool key={name} $on={name === "select"}>
              <Icon>{icons[name]}</Icon>
            </ColumnTool>
          ))}
        </ToolColumn>

        <Workspace>
          <div />
          <HRuler />
          <VRuler />
          <ViewWrap>
            <ViewRow>
              <Canvas>
                <Page>
                  <PageLabel
                    $x={536}
                    $y={485}
                    $font={'"Liberation Serif", serif'}
                    $size={123}
                    $weight={700}
                    $italic="italic"
                    $squeeze={0.81}
                  >
                    Hello World, I'm an accent font
                  </PageLabel>
                  <PageLabel $x={536} $y={697} $font={'"Noto Sans", sans-serif'} $size={94}>
                    Hello World, I'm a sans serif font
                  </PageLabel>
                  <PageLabel $x={538} $y={889} $font={'"Liberation Serif", serif'} $size={108} $track={1.2}>
                    Hello World, I'm a serif font
                  </PageLabel>
                  <Selection>
                    {range(0, 8).map((i) => (
                      <Handle key={i} $hidden={i === 4} />
                    ))}
                  </Selection>
                </Page>
              </Canvas>
              <VScroll>
                <VThumb />
              </VScroll>
            </ViewRow>
            <HScroll>
              <HTrack>
                <HThumb />
              </HTrack>
              <ScrollCorner />
            </HScroll>
          </ViewWrap>
        </Workspace>

        <Dock>
          <TabBar $h={54}>
            <Tab $on>Items</Tab>
            <Tab>Undo History</Tab>
          </TabBar>
          <DockTitle>
            Items
            <FloatMark />
          </DockTitle>
          <ItemsPanel>
            <ItemsInner>
              <ItemsHeader>
                <HeaderCell $line $pl={5}>
                  <svg width="34" height="32" viewBox="0 0 34 32">
                    <path d="M2 16q15-16 30 0-15 16-30 0z" fill="#ddd" />
                    <circle cx="17" cy="16" r="7" fill="#777" />
                    <circle cx="17" cy="16" r="3" fill="#222" />
                    <path d="M3 8q14-9 28-1" fill="none" stroke="#aaa" strokeWidth="1.500" />
                  </svg>
                </HeaderCell>
                <HeaderCell $line $pl={11}>
                  <svg width="26" height="34" viewBox="0 0 26 34">
                    <path d="M5 16V11a8 8 0 0116 0v5" fill="none" stroke="#bbb" strokeWidth="3" />
                    <rect x="1" y="15" width="24" height="18" rx="2" fill="#777" />
                  </svg>
                </HeaderCell>
                <HeaderCell $pl={6}>Item</HeaderCell>
              </ItemsHeader>
              {items.map(([name, bold]) => (
                <ItemRow key={name}>
                  <CheckBox $on $ml={4}>
                    <Tick />
                  </CheckBox>
                  <CheckBox $ml={6} />
                  <TypeIcon>T</TypeIcon>
                  <ItemName $bold={bold}>{name}</ItemName>
                </ItemRow>
              ))}
            </ItemsInner>
          </ItemsPanel>

          <TabBar $h={52} $mt={11}>
            <Tab>Layout</Tab>
            <Tab $on>Item Properties</Tab>
            <Tab>Guides</Tab>
          </TabBar>
          <DockTitle>
            Item Properties
            <FloatMark />
          </DockTitle>
          <BackRow>
            <BackBtn>
              <svg width="18" height="32" viewBox="0 0 18 32">
                <path d="M16 1v30L1 16z" fill="#6a9fd8" />
              </svg>
            </BackBtn>
            Label Font
          </BackRow>
          <SubTabBar>
            {subIcons.map((icon, i) => (
              <SubTab key={i} $on={i === 0} $first={i === 0}>
                {icon}
              </SubTab>
            ))}
            <SubTabFill />
          </SubTabBar>

          <Form>
            <FormBody>
              <FormRow $h={56}>
                <FormLabel>Text</FormLabel>
              </FormRow>
              <FormRow $h={58}>
                <FormLabel>Font</FormLabel>
                <Combo>
                  Noto Serif
                  <ComboArrow>
                    <SmallArrow />
                  </ComboArrow>
                </Combo>
                <Defined>
                  <DefinedIcon />
                </Defined>
              </FormRow>
              <FormRow $h={62} $mt={20}>
                <FormLabel>Style</FormLabel>
                <Defined>
                  <DefinedIcon />
                </Defined>
              </FormRow>
              <FormRow $h={64}>
                <Defined>
                  <DefinedIcon />
                </Defined>
              </FormRow>
              <FormRow $h={64}>
                <FormLabel>Size</FormLabel>
                <Defined>
                  <DefinedIcon />
                </Defined>
              </FormRow>
              <FormRow $h={64}>
                <Defined>
                  <DefinedIcon />
                </Defined>
              </FormRow>
              <FormRow $h={64}>
                <FormLabel $pl={3}>Color</FormLabel>
                <Defined>
                  <DefinedIcon />
                </Defined>
              </FormRow>
              <FormRow $h={64}>
                <FormLabel>Opacity</FormLabel>
                <Defined>
                  <DefinedIcon />
                </Defined>
              </FormRow>
              <FormRow $h={48} $pl={19}>
                <CheckBox />
                <CheckLabel>Allow HTML</CheckLabel>
              </FormRow>
              <FormRow $h={46} $mt={23}>
                <SearchBox>
                  <svg width="30" height="30" viewBox="0 0 30 30">
                    <circle cx="12" cy="12" r="9" fill="none" stroke="#bbb" strokeWidth="2" />
                    <path d="M18 19l8 9" stroke="#bbb" strokeWidth="2" />
                  </svg>
                  Topo
                </SearchBox>
                <Defined>
                  <svg width="32" height="36" viewBox="0 0 32 36" fontFamily="Liberation Mono, monospace">
                    <circle cx="9" cy="9" r="6" fill="#d8662c" />
                    <path d="M20 15l9-12" stroke="#5a8fd0" strokeWidth="2.500" />
                    <rect x="3" y="20" width="12" height="14" fill="#8fc08f" />
                    <text x="18" y="31" fontSize="16" fill="#ddd">a</text>
                  </svg>
                </Defined>
              </FormRow>
              <StylePanel>
                <StyleName>Project Styles</StyleName>
                <StyleName>Default</StyleName>
              </StylePanel>
            </FormBody>
            <FormScroll>
              <ScrollThumb $h={73} />
            </FormScroll>
            <Popup>
              {fontStyles.map((s) => (
                <PopupRow key={s} $on={s === "Regular"}>
                  {s}
                </PopupRow>
              ))}
            </Popup>
            <RedBox />
          </Form>
        </Dock>
      </Main>

      <StatusBar>
        <StatusText $w={2973} $pl={12}>
          1 item selected
        </StatusText>
        <StatusText $w={217}>x: 313.454 mm</StatusText>
        <StatusText $w={213}>y: 88.2741 mm</StatusText>
        <StatusText $w={202}>page: 1</StatusText>
        <ZoomCombo>102.6%</ZoomCombo>
        <ZoomArrow />
        <ZoomSlider>
          <SliderFill />
          <SliderKnob />
        </ZoomSlider>
      </StatusBar>
    </Root>
  );
};

export default App;
